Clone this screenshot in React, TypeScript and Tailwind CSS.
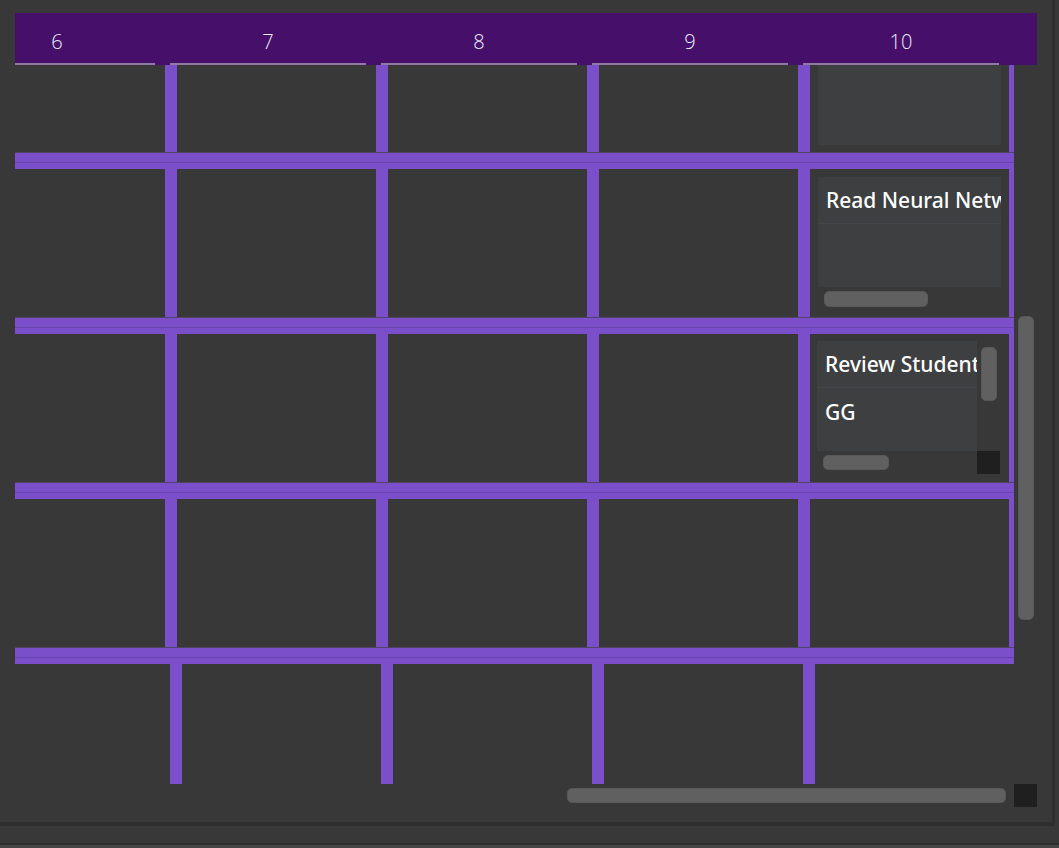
import React from 'react';

const days = ['6', '7', '8', '9', '10'];

function HLine() {
  return (
    <div className="flex flex-col w-full shrink-0">
      <div className="h-px bg-[#4f4560]" />
      <div className="h-[9px] bg-[#7a4fc9]" />
      <div className="h-px bg-[#6743ad]" />
      <div className="h-[6px] bg-[#7a4fc9]" />
    </div>
  );
}

function VLine() {
  return <div className="w-[12px] shrink-0 bg-[#7a4fc9]" />;
}

function Handle({ className }: { className: string }) {
  return <div className={`absolute rounded-[5px] bg-[#606060] border border-[#585858] ${className}`} />;
}

function ListItem({ text }: { text: string }) {
  return (
    <div className="h-[47px] flex items-center pl-2 pt-[2px] border-b border-[#444548] whitespace-nowrap overflow-hidden text-white text-[21px] font-medium">
      {text}
    </div>
  );
}

function TopCard() {
  return (
    <div className="h-full pt-2 pb-[7px] px-2">
      <div className="h-full bg-[#3e3f41]" />
    </div>
  );
}

function NeuralCard() {
  return (
    <div className="h-full pt-2 px-2 flex flex-col">
      <div className="h-[110px] bg-[#3e3f41] overflow-hidden">
        <ListItem text="Read Neural Networks" />
      </div>
      <div className="relative h-[20px]">
        <Handle className="left-[6px] top-[4px] w-[104px] h-[16px]" />
      </div>
    </div>
  );
}

function ReviewCard() {
  return (
    <div className="h-full pt-[7px] pl-[7px] flex flex-col">
      <div className="flex h-[110px]">
        <div className="w-[160px] bg-[#3e3f41] overflow-hidden">
          <ListItem text="Review Student Papers" />
          <div className="h-[47px] flex items-center pl-2 pt-[2px] text-white text-[21px] font-medium">GG</div>
        </div>
        <div className="relative w-[24px]">
          <Handle className="left-[4px] top-[6px] w-[16px] h-[54px]" />
        </div>
      </div>
      <div className="flex h-[23px]">
        <div className="relative w-[160px]">
          <Handle className="left-[6px] top-[4px] w-[66px] h-[15px]" />
        </div>
        <div className="w-[23px] h-[23px] bg-[#1f1f1f]" />
      </div>
    </div>
  );
}

function Row({ last }: { last?: React.ReactNode }) {
  return (
    <div className="flex h-[148px] shrink-0">
      {[0, 1, 2, 3].map((i) => (
        <React.Fragment key={i}>
          <div className="w-[199px] shrink-0" />
          <VLine />
        </React.Fragment>
      ))}
      <div className="w-[199px] shrink-0">{last}</div>
      <VLine />
    </div>
  );
}

export default function App() {
  return (
    <div
      className="w-[1059px] h-[848px] bg-[#383838] overflow-hidden flex flex-col"
      style={{ fontFamily: '"Noto Sans", "Open Sans", sans-serif' }}
    >
      <div className="h-[826px] w-[1055px] shrink-0 border-r-[3px] border-b-[4px] border-[#2e2e2e] flex flex-col pl-[15px] pt-[13px]">
        {/* day header */}
        <div className="w-[1022px] h-[52px] shrink-0 bg-[#450f6a] overflow-hidden">
          <div className="flex gap-[15px] -ml-[56px] h-full">
            {days.map((d) => (
              <div key={d} className="w-[196px] shrink-0 flex flex-col">
                <div
                  className="flex-1 flex items-center justify-center pt-[7px] text-[20px] font-light text-[#ececfa]"
                  style={{ fontFamily: '"Open Sans", "Noto Sans", sans-serif' }}
                >
                  {d}
                </div>
                <div className="h-[2px] bg-[#8f7aa3]" />
              </div>
            ))}
          </div>
        </div>

        {/* scroll area */}
        <div className="flex h-[719px] shrink-0">
          <div className="w-[999px] h-full overflow-hidden">
            <div className="-ml-[49px] -mt-[61px] flex flex-col w-[1200px]">
              <Row last={<TopCard />} />
              <HLine />
              <Row last={<NeuralCard />} />
              <HLine />
              <Row last={<ReviewCard />} />
              <HLine />
              <Row />
              <HLine />
              <div className="flex h-[200px] ml-[5px]">
                {[0, 1, 2, 3, 4].map((i) => (
                  <React.Fragment key={i}>
                    <div className="w-[199px] shrink-0" />
                    <VLine />
                  </React.Fragment>
                ))}
              </div>
            </div>
          </div>
          <div className="relative w-[23px] h-full">
            <Handle className="left-[4px] top-[251px] w-[16px] h-[304px]" />
          </div>
        </div>

        <div className="flex h-[23px] shrink-0">
          <div className="relative w-[999px] h-full">
            <Handle className="left-[552px] top-[4px] w-[439px] h-[15px]" />
          </div>
          <div className="w-[23px] h-[23px] bg-[#1f1f1f]" />
        </div>
      </div>

      <div className="h-[17px] shrink-0" />
      <div className="h-px bg-[#2a2a2a] shrink-0" />
      <div className="h-px bg-[#303030] shrink-0" />
      <div className="flex-1 bg-[#454545]" />
    </div>
  );
}
